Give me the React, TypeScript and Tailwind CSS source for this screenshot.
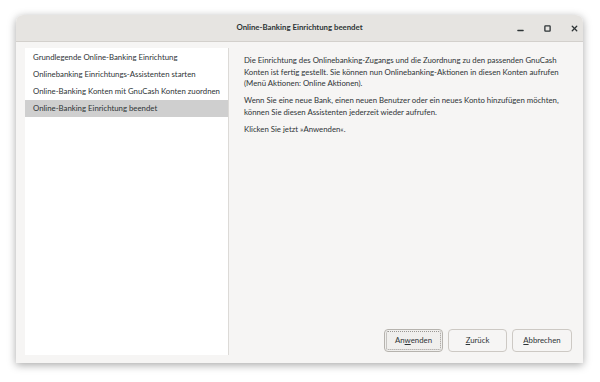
import { Minus, Square, X } from "lucide-react";

const steps = [
  "Grundlegende Online-Banking Einrichtung",
  "Onlinebanking Einrichtungs-Assistenten starten",
  "Online-Banking Konten mit GnuCash Konten zuordnen",
  "Online-Banking Einrichtung beendet",
];

export default function App() {
  return (
    <div className="w-[600px] h-[382px] bg-white pt-[15px] pl-[16px] font-['Lato',sans-serif] text-[#2e3436]">
      <div className="w-[567px] h-[348px] flex flex-col rounded-t-[7px] shadow-[0_2px_8px_rgba(0,0,0,0.35)] overflow-hidden">
        {/* title bar */}
        <div className="h-[27px] bg-[#e6e4e1] border-b border-[#d3d0cc] flex items-center relative">
          <div className="flex-1 text-center text-[7.8px] font-bold">
            Online-Banking Einrichtung beendet
          </div>
          <div className="absolute right-[4px] top-0 h-full flex items-center gap-[19px]">
            <Minus size={9} strokeWidth={3.5} className="mt-[4px]" />
            <Square size={7} strokeWidth={4.5} />
            <X size={9} strokeWidth={3.5} />
          </div>
        </div>

        {/* body */}
        <div className="flex-1 bg-[#f6f5f4] flex pt-[6px] pb-[8px] pl-[9px]">
          <div className="w-[204px] bg-white border-r border-[#dcdad7] flex flex-col pt-[1px]">
            {steps.map((s, i) => (
              <div
                key={i}
                className={
                  "h-[17px] flex items-center pl-[8px] text-[7.8px] whitespace-nowrap " +
                  (i === 3 ? "bg-[#cfcfcf]" : "")
                }
              >
                {s}
              </div>
            ))}
          </div>

          <div className="flex-1 flex flex-col pl-[15px] pr-[11px]">
            <div className="pt-[7px] text-[7.8px] leading-[11.5px] flex flex-col gap-[5.5px] whitespace-nowrap">
              <p>
                Die Einrichtung des Onlinebanking-Zugangs und die Zuordnung zu den passenden GnuCash
                <br />
                Konten ist fertig gestellt. Sie können nun Onlinebanking-Aktionen in diesen Konten aufrufen
                <br />
                (Menü Aktionen: Online Aktionen).
              </p>
              <p>
                Wenn Sie eine neue Bank, einen neuen Benutzer oder ein neues Konto hinzufügen möchten,
                <br />
                können Sie diesen Assistenten jederzeit wieder aufrufen.
              </p>
              <p>Klicken Sie jetzt »Anwenden«.</p>
            </div>

            <div className="mt-auto flex justify-end gap-[5px] pb-[3px]">
              <button className="w-[59px] h-[23px] rounded-[4px] border border-[#b6b3ae] bg-[#f0efed] text-[7.8px] outline-1 outline-dotted outline-offset-[-3px] outline-[#9a9793]">
                An<span className="underline">w</span>enden
              </button>
              <button className="w-[59px] h-[23px] rounded-[4px] border border-[#cdc9c4] bg-[#f6f5f4] text-[7.8px]">
                <span className="underline">Z</span>urück
              </button>
              <button className="w-[60px] h-[23px] rounded-[4px] border border-[#cdc9c4] bg-[#f6f5f4] text-[7.8px]">
                <span className="underline">A</span>bbrechen
              </button>
            </div>
          </div>
        </div>
      </div>
    </div>
  );
}
